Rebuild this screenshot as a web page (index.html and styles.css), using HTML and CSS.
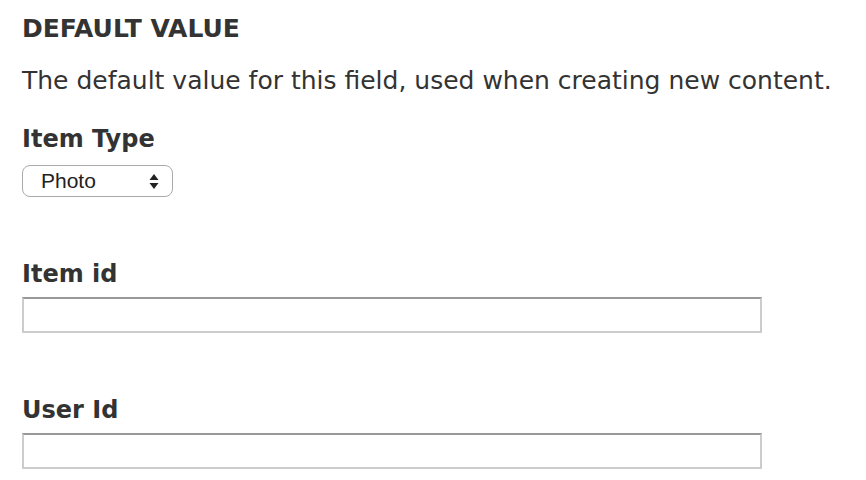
FILE: index.html
```html
<!DOCTYPE html>
<html lang="en">
<head>
    <meta charset="UTF-8">
    <title>Default value</title>
    <link rel="stylesheet" href="styles.css">
</head>
<body>
    <div class="field-default">
        <h4 class="section-title">DEFAULT VALUE</h4>
        <p class="description">The default value for this field, used when creating new content.</p>

        <div class="form-item first">
            <label for="item-type">Item Type</label>
            <div class="select-box">
                <span class="select-value">Photo</span>
                <svg class="select-arrows" width="10" height="18" viewBox="0 0 10 18">
                    <path d="M5 2 L9.5 8 L0.5 8 Z" fill="#222"/>
                    <path d="M0.5 11 L9.5 11 L5 17 Z" fill="#222"/>
                </svg>
            </div>
        </div>

        <div class="form-item">
            <label for="item-id">Item id</label>
            <input type="text" id="item-id" class="text-input">
        </div>

        <div class="form-item">
            <label for="user-id">User Id</label>
            <input type="text" id="user-id" class="text-input">
        </div>
    </div>
</body>
</html>
```

FILE: styles.css
```css
body {
    margin: 0;
    background-color: #ffffff;
    font-family: 'DejaVu Sans', sans-serif;
    color: #333;
}
.field-default {
    padding: 14px 22px 0 22px;
}
.section-title {
    margin: 0;
    font-size: 25px;
    line-height: 30px;
    font-weight: bold;
    color: #333;
}
.description {
    margin: 22px 0 0 0;
    font-size: 25px;
    line-height: 30px;
    color: #333;
}
.form-item {
    margin-top: 62px;
}
.form-item.first {
    margin-top: 28px;
}
label {
    display: block;
    font-size: 24px;
    line-height: 30px;
    font-weight: bold;
    color: #333;
}
.select-box {
    display: flex;
    align-items: center;
    justify-content: space-between;
    box-sizing: border-box;
    width: 151px;
    height: 32px;
    margin-top: 11px;
    padding: 0 13px 0 18px;
    border: 1px solid #aaa;
    border-radius: 8px;
    background-color: #fff;
    font-family: 'Liberation Sans', Arial, sans-serif;
    font-size: 21px;
    color: #222;
}
.text-input {
    display: block;
    box-sizing: border-box;
    width: 740px;
    height: 36px;
    margin-top: 8px;
    border: 2px solid #ccc;
    border-top-color: #999;
    background-color: #fff;
}
```
